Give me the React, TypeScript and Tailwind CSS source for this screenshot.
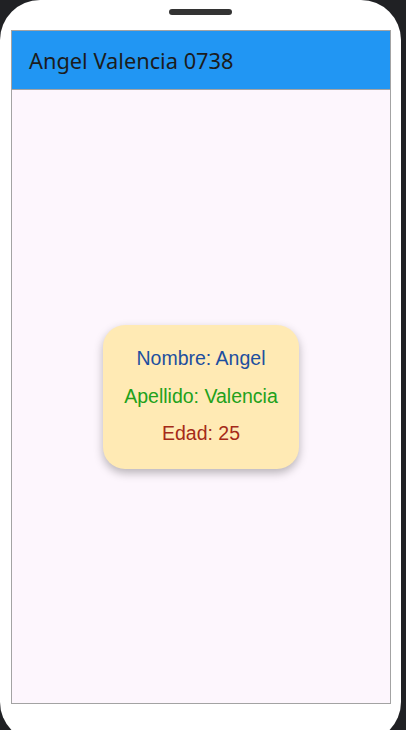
const rows = [
  { label: "Nombre: Angel", color: "text-[#1d4f9f]" },
  { label: "Apellido: Valencia", color: "text-[#22a11b]" },
  { label: "Edad: 25", color: "text-[#a52a18]" },
];

const App = () => {
  return (
    <div className="w-[406px] h-[730px] bg-[#202124] overflow-hidden">
      <div className="w-[401px] h-[742px] bg-white rounded-[40px] pt-[9px]">
        <div className="mx-auto w-[63px] h-[6px] rounded-full bg-[#333333]" />
        <div className="mt-[15px] ml-[11px] w-[380px] h-[674px] border border-[#a3a3a3] flex flex-col">
          <header className="h-[59px] bg-[#2196f3] border-b border-[#a3a3a3] flex items-center pl-[17px]">
            <h1 className="text-[21.8px] text-[#1c1c1c] font-['Noto_Sans',sans-serif] pt-[2px]">
              Angel Valencia 0738
            </h1>
          </header>
          <main className="flex-1 bg-[#fdf6fd] flex items-center justify-center">
            <div className="w-[196px] h-[144px] rounded-[22px] bg-[#ffeab4] shadow-[0_4px_10px_rgba(0,0,0,0.28)] flex flex-col items-center justify-center font-['Liberation_Sans',Arial,sans-serif] text-[19.5px]">
              {rows.map((row) => (
                <p key={row.label} className={`leading-[37.5px] ${row.color}`}>
                  {row.label}
                </p>
              ))}
            </div>
          </main>
        </div>
      </div>
    </div>
  );
};

export default App;
